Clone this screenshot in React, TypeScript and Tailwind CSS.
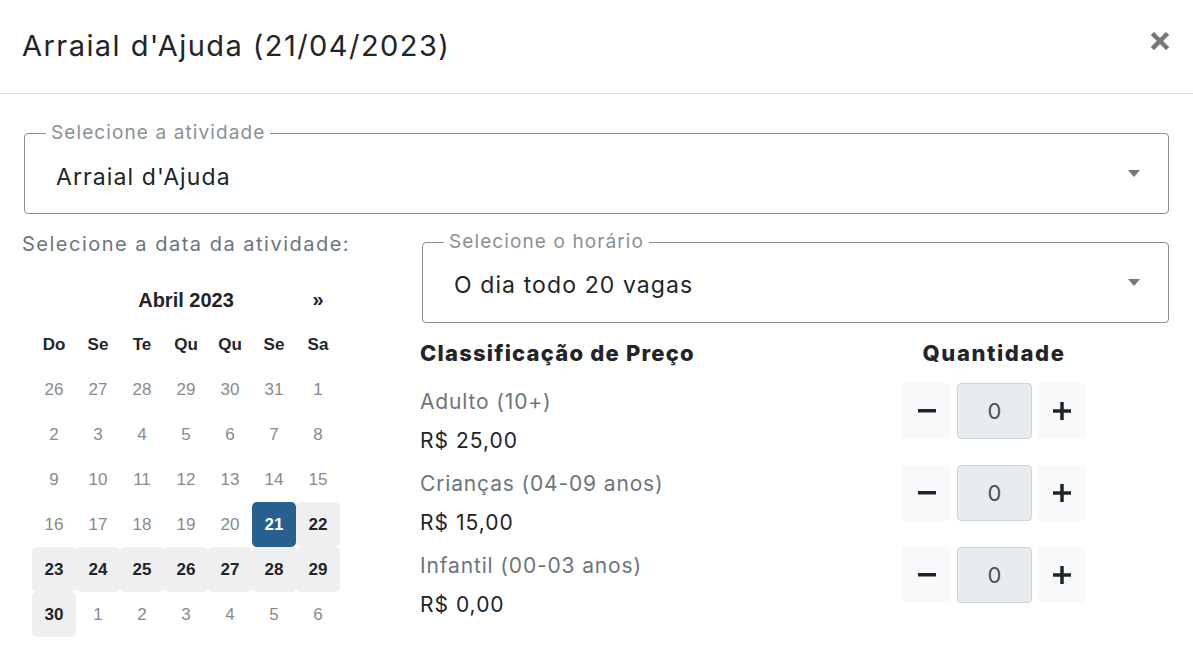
import { useState } from "react";

type Cell = { d: number; cur: boolean; on?: boolean; sel?: boolean };

const weeks: Cell[][] = [
  [26, 27, 28, 29, 30, 31].map((d) => ({ d, cur: false })).concat([{ d: 1, cur: true }]),
  [2, 3, 4, 5, 6, 7, 8].map((d) => ({ d, cur: true })),
  [9, 10, 11, 12, 13, 14, 15].map((d) => ({ d, cur: true })),
  [16, 17, 18, 19, 20].map((d) => ({ d, cur: true } as Cell)).concat([
    { d: 21, cur: true, on: true, sel: true },
    { d: 22, cur: true, on: true },
  ]),
  [23, 24, 25, 26, 27, 28, 29].map((d) => ({ d, cur: true, on: true })),
  [{ d: 30, cur: true, on: true } as Cell].concat([1, 2, 3, 4, 5, 6].map((d) => ({ d, cur: false }))),
];

const prices = [
  { label: "Adulto (10+)", price: "R$ 25,00" },
  { label: "Crianças (04-09 anos)", price: "R$ 15,00" },
  { label: "Infantil (00-03 anos)", price: "R$ 0,00" },
];

const Caret = () => (
  <svg width="12" height="7" viewBox="0 0 12 7" className="shrink-0">
    <path d="M0 0h12L6 7z" fill="#777" />
  </svg>
);

const OutlinedSelect = ({ label, value, pt }: { label: string; value: string; pt: string }) => (
  <div className="relative flex items-center justify-between border border-[#8d8d8d] rounded-[4px] pl-[31px] pr-[28px] h-[81px]">
    <span className="absolute -top-[12px] left-[21px] bg-white px-[5px] text-[19px] leading-[22px] tracking-[1.1px] text-[#8b9096]">
      {label}
    </span>
    <span className={`text-[23px] tracking-[1.1px] text-[#212529] ${pt}`}>{value}</span>
    <Caret />
  </div>
);

const Stepper = () => {
  const [n, setN] = useState(0);
  return (
    <div className="flex gap-[6px] h-[56px]">
      <button
        onClick={() => setN(Math.max(0, n - 1))}
        className="w-[49px] h-full bg-[#f8f9fa] rounded-[4px] flex items-center justify-center"
      >
        <svg width="18" height="4" viewBox="0 0 18 4">
          <rect width="18" height="3.5" fill="#212529" />
        </svg>
      </button>
      <div className="w-[75px] h-full bg-[#e9ecef] border border-[#ced4da] rounded-[4px] flex items-center justify-center text-[22px] text-[#495057]">
        {n}
      </div>
      <button
        onClick={() => setN(n + 1)}
        className="w-[48px] h-full bg-[#f8f9fa] rounded-[4px] flex items-center justify-center"
      >
        <svg width="18" height="18" viewBox="0 0 18 18">
          <rect y="7.25" width="18" height="3.5" fill="#212529" />
          <rect x="7.25" width="3.5" height="18" fill="#212529" />
        </svg>
      </button>
    </div>
  );
};

export default function App() {
  return (
    <div className="w-[1193px] h-[670px] bg-white overflow-hidden font-['Inter',sans-serif] text-[#212529]">
      <div className="h-[94px] border-b border-[#dee2e6] flex items-center justify-between pl-[22px] pr-[24px]">
        <h1 className="text-[29px] leading-none tracking-[1.45px] -mt-[2px]">Arraial d'Ajuda (21/04/2023)</h1>
        <svg width="18" height="18" viewBox="0 0 18 18" className="-mt-[12px]">
          <path d="M3 3l12 12M15 3L3 15" stroke="#777" strokeWidth="4.5" strokeLinecap="square" />
        </svg>
      </div>

      <div className="px-[24px] pt-[39px]">
        <OutlinedSelect label="Selecione a atividade" value="Arraial d'Ajuda" pt="pt-[7px]" />

        <div className="flex mt-[17px]">
          <div className="w-[398px] shrink-0">
            <p className="text-[20px] leading-[27px] tracking-[1.5px] text-[#6c757d] -ml-[2px]">
              Selecione a data da atividade:
            </p>
            <div className="ml-[8px] mt-[20px] w-[308px] font-['Liberation_Sans',Arial,sans-serif]">
              <div className="grid grid-cols-7 h-[44px] items-center text-center">
                <span />
                <span className="col-span-5 text-[20px] font-bold">Abril 2023</span>
                <span className="text-[20px] font-bold -mt-[2px]">»</span>
              </div>
              <div className="grid grid-cols-7 h-[45px] items-center text-center text-[17px] font-bold">
                {["Do", "Se", "Te", "Qu", "Qu", "Se", "Sa"].map((w, i) => (
                  <span key={i}>{w}</span>
                ))}
              </div>
              {weeks.map((row, r) => (
                <div key={r} className="grid grid-cols-7">
                  {row.map((c, i) => (
                    <div
                      key={i}
                      className={`h-[45px] flex items-center justify-center text-[17px] rounded-[5px] ${
                        c.sel
                          ? "bg-[#275f8f] text-white font-bold"
                          : c.on
                          ? "bg-[#efefef] text-[#212529] font-bold"
                          : "text-[#8a8a8a]"
                      }`}
                    >
                      {c.d}
                    </div>
                  ))}
                </div>
              ))}
            </div>
          </div>

          <div className="flex-1 pt-[11px]">
            <OutlinedSelect label="Selecione o horário" value="O dia todo 20 vagas" pt="pt-[6px]" />

            <div className="flex mt-[15px] -ml-[2px]">
              <div className="w-[482px]">
                <h2 className="text-[22px] leading-[30px] tracking-[1.2px] font-extrabold">Classificação de Preço</h2>
              </div>
              <div className="w-[184px] text-center">
                <h2 className="text-[22px] leading-[30px] tracking-[1.6px] font-extrabold">Quantidade</h2>
              </div>
            </div>

            <div className="mt-[14px] -ml-[2px] flex flex-col gap-[4px]">
              {prices.map((p) => (
                <div key={p.label} className="flex">
                  <div className="w-[482px]">
                    <p className="text-[21px] leading-[39px] tracking-[0.85px] text-[#6c757d]">{p.label}</p>
                    <p className="text-[21px] leading-[39px] tracking-[1px] text-[#212529]">{p.price}</p>
                  </div>
                  <div className="pt-[1px]">
                    <Stepper />
                  </div>
                </div>
              ))}
            </div>
          </div>
        </div>
      </div>
    </div>
  );
}
